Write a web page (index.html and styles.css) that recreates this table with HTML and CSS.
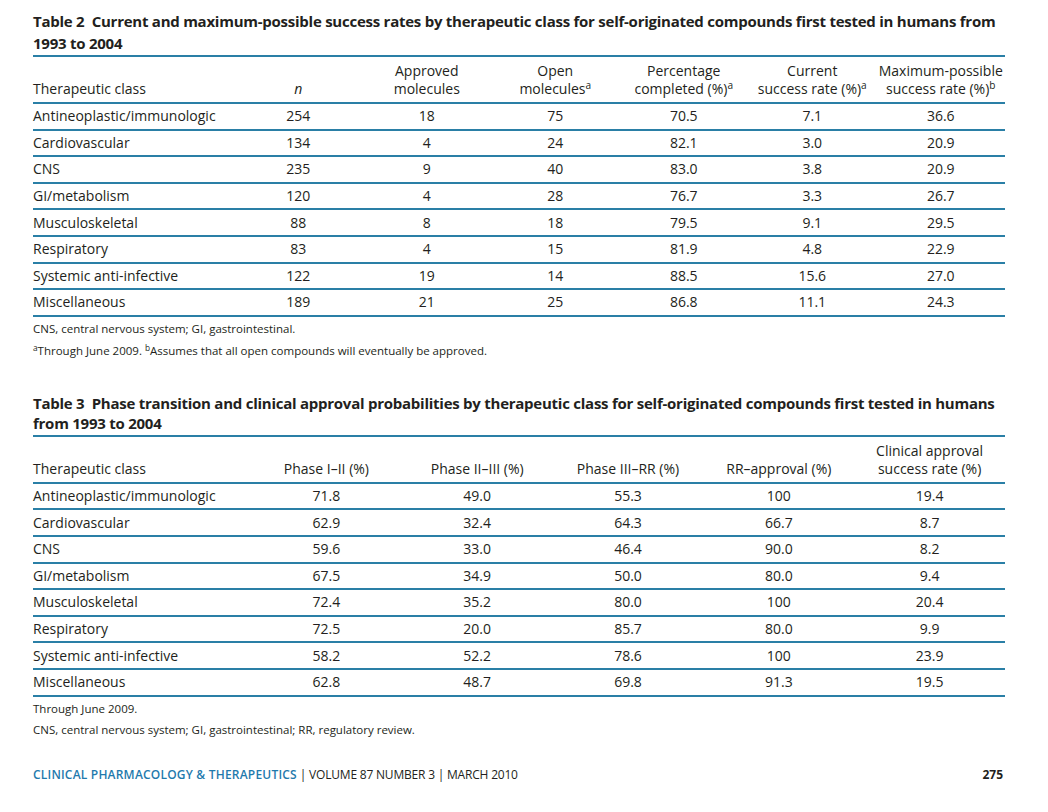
FILE: index.html
```html
<!DOCTYPE html>
<html lang="en">
<head>
<meta charset="utf-8">
<title>Tables 2 and 3</title>
<link rel="stylesheet" href="styles.css">
</head>
<body>
<div class="page">
  <section class="block">
    <h2 class="title">Table 2&ensp;Current and maximum-possible success rates by therapeutic class for self-originated compounds first tested in humans from 1993 to 2004</h2>
    <table class="data t2">
      <colgroup><col class="c-label"><col><col><col><col><col><col></colgroup>
      <thead>
        <tr>
          <th class="label">Therapeutic class</th>
          <th><i>n</i></th>
          <th>Approved<br>molecules</th>
          <th>Open<br>molecules<sup>a</sup></th>
          <th>Percentage<br>completed (%)<sup>a</sup></th>
          <th>Current<br>success rate (%)<sup>a</sup></th>
          <th>Maximum-possible<br>success rate (%)<sup>b</sup></th>
        </tr>
      </thead>
      <tbody>
        <tr><td class="label">Antineoplastic/immunologic</td><td>254</td><td>18</td><td>75</td><td>70.5</td><td>7.1</td><td>36.6</td></tr>
        <tr><td class="label">Cardiovascular</td><td>134</td><td>4</td><td>24</td><td>82.1</td><td>3.0</td><td>20.9</td></tr>
        <tr><td class="label">CNS</td><td>235</td><td>9</td><td>40</td><td>83.0</td><td>3.8</td><td>20.9</td></tr>
        <tr><td class="label">GI/metabolism</td><td>120</td><td>4</td><td>28</td><td>76.7</td><td>3.3</td><td>26.7</td></tr>
        <tr><td class="label">Musculoskeletal</td><td>88</td><td>8</td><td>18</td><td>79.5</td><td>9.1</td><td>29.5</td></tr>
        <tr><td class="label">Respiratory</td><td>83</td><td>4</td><td>15</td><td>81.9</td><td>4.8</td><td>22.9</td></tr>
        <tr><td class="label">Systemic anti-infective</td><td>122</td><td>19</td><td>14</td><td>88.5</td><td>15.6</td><td>27.0</td></tr>
        <tr><td class="label">Miscellaneous</td><td>189</td><td>21</td><td>25</td><td>86.8</td><td>11.1</td><td>24.3</td></tr>
      </tbody>
    </table>
    <div class="notes">
      <p>CNS, central nervous system; GI, gastrointestinal.</p>
      <p><sup>a</sup>Through June 2009. <sup>b</sup>Assumes that all open compounds will eventually be approved.</p>
    </div>
  </section>

  <section class="block second">
    <h2 class="title">Table 3&ensp;Phase transition and clinical approval probabilities by therapeutic class for self-originated compounds first tested in humans from 1993 to 2004</h2>
    <table class="data t3">
      <colgroup><col class="c-label"><col><col><col><col><col></colgroup>
      <thead>
        <tr>
          <th class="label">Therapeutic class</th>
          <th>Phase I&ndash;II (%)</th>
          <th>Phase II&ndash;III (%)</th>
          <th>Phase III&ndash;RR (%)</th>
          <th>RR&ndash;approval (%)</th>
          <th>Clinical approval<br>success rate (%)</th>
        </tr>
      </thead>
      <tbody>
        <tr><td class="label">Antineoplastic/immunologic</td><td>71.8</td><td>49.0</td><td>55.3</td><td>100</td><td>19.4</td></tr>
        <tr><td class="label">Cardiovascular</td><td>62.9</td><td>32.4</td><td>64.3</td><td>66.7</td><td>8.7</td></tr>
        <tr><td class="label">CNS</td><td>59.6</td><td>33.0</td><td>46.4</td><td>90.0</td><td>8.2</td></tr>
        <tr><td class="label">GI/metabolism</td><td>67.5</td><td>34.9</td><td>50.0</td><td>80.0</td><td>9.4</td></tr>
        <tr><td class="label">Musculoskeletal</td><td>72.4</td><td>35.2</td><td>80.0</td><td>100</td><td>20.4</td></tr>
        <tr><td class="label">Respiratory</td><td>72.5</td><td>20.0</td><td>85.7</td><td>80.0</td><td>9.9</td></tr>
        <tr><td class="label">Systemic anti-infective</td><td>58.2</td><td>52.2</td><td>78.6</td><td>100</td><td>23.9</td></tr>
        <tr><td class="label">Miscellaneous</td><td>62.8</td><td>48.7</td><td>69.8</td><td>91.3</td><td>19.5</td></tr>
      </tbody>
    </table>
    <div class="notes">
      <p>Through June 2009.</p>
      <p>CNS, central nervous system; GI, gastrointestinal; RR, regulatory review.</p>
    </div>
  </section>

  <footer class="footer">
    <div class="journal"><span class="jname">CLINICAL PHARMACOLOGY &amp; THERAPEUTICS</span><span class="jrest"> | VOLUME 87 NUMBER 3 | MARCH 2010</span></div>
    <div class="pageno">275</div>
  </footer>
</div>
</body>
</html>
```

FILE: styles.css
```css
html, body {
  margin: 0;
  padding: 0;
  background: #ffffff;
}

body {
  font-family: "Open Sans", "Noto Sans", sans-serif;
  color: #231f20;
}

.page {
  width: 972px;
  padding: 10px 0 0 33px;
}

.title {
  margin: 0;
  font-size: 15px;
  font-weight: 700;
  line-height: 22px;
  letter-spacing: -0.25px;
  word-spacing: 0;
  color: #231f20;
}

.data {
  width: 972px;
  border-collapse: collapse;
  table-layout: fixed;
  margin-top: 1px;
  border-top: 2px solid #2a7fa6;
  font-size: 14px;
}

.t2 .c-label { width: 201px; }
.t3 .c-label { width: 218px; }

.data th {
  font-weight: 400;
  line-height: 18px;
  padding: 5px 0 4px;
  text-align: center;
  vertical-align: bottom;
  border-bottom: 2px solid #2a7fa6;
}

.data td {
  height: 24.6px;
  padding: 0;
  text-align: center;
  vertical-align: middle;
  line-height: 18px;
  border-bottom: 2px solid #2a7fa6;
}

.data .label {
  text-align: left;
}

.data sup, .notes sup {
  font-size: 0.72em;
  line-height: 0;
  vertical-align: 0.5em;
}

.notes {
  padding-top: 1px;
  font-size: 11.5px;
  line-height: 22px;
}

.notes p {
  margin: 0;
}

.second {
  margin-top: 31px;
}

.second .title {
  line-height: 20px;
}

.second .data {
  margin-top: 2px;
}

.second .data th {
  padding-top: 5px;
}

.second .notes {
  line-height: 21px;
}

.footer {
  margin-top: 27px;
  display: flex;
  justify-content: space-between;
  align-items: baseline;
  font-size: 12px;
  line-height: 16px;
}

.jname {
  color: #1f7aad;
  font-weight: 600;
  letter-spacing: 0.2px;
}

.jrest {
  letter-spacing: -0.2px;
}

.pageno {
  font-weight: 700;
  padding-right: 2px;
}
```
